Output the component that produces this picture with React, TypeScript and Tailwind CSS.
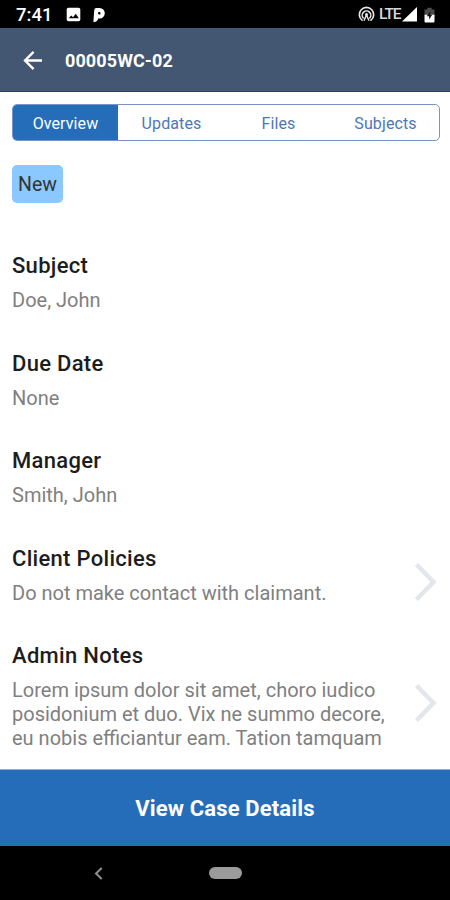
import clsx from "clsx"

const tabs = ["Overview", "Updates", "Files", "Subjects"]

const sections = [
  { title: "Subject", body: "Doe, John", link: false },
  { title: "Due Date", body: "None", link: false },
  { title: "Manager", body: "Smith, John", link: false },
  {
    title: "Client Policies",
    body: "Do not make contact with claimant.",
    link: true,
  },
  {
    title: "Admin Notes",
    body: "Lorem ipsum dolor sit amet, choro iudico posidonium et duo. Vix ne summo decore, eu nobis efficiantur eam. Tation tamquam",
    link: true,
  },
]

function StatusBar() {
  return (
    <div className="flex h-[27.5px] shrink-0 items-center bg-black pl-4 pr-[15px] text-white">
      <span className="w-[50px] pt-0.5 text-[18.5px] font-medium leading-none">
        7:41
      </span>
      <svg className="mt-0.5" width="15" height="15" viewBox="0 0 15 15">
        <rect x="0.7" y="0.7" width="13.6" height="13.6" rx="1.8" fill="#fff" />
        <path d="M2.8 11.2 5.2 8.4 7 10.2l2.8-3.4 3 4.4z" fill="#000" />
      </svg>
      <svg className="ml-3 mt-0.5" width="12" height="14" viewBox="0 0 12 14">
        <path
          fill="#fff"
          fillRule="evenodd"
          d="M1.2 2.5A2.4 2.4 0 0 1 3.6.1h3a5.2 5.2 0 0 1 0 10.4H5.2A3.7 3.7 0 0 1 .4 13.7zM6.3 4a1.3 1.3 0 1 0 0 2.6 1.3 1.3 0 0 0 0-2.6z"
        />
      </svg>
      <div className="ml-auto flex items-center pt-0.5">
        <svg width="17" height="17" viewBox="0 0 17 17" fill="none" stroke="#e8e8e8" strokeLinecap="round">
          <path d="M4 14.2a7.2 7.2 0 1 1 9 0" strokeWidth="1.6" />
          <path d="M5.2 12a4.3 4.3 0 1 1 6.6 0" strokeWidth="1.5" />
          <path d="M6.2 14.2 8.5 9l2.3 5.2" strokeWidth="1.4" />
          <circle cx="8.5" cy="8.6" r="1.5" fill="#e8e8e8" stroke="none" />
        </svg>
        <span className="ml-1 w-[21px] text-[15.5px] font-medium leading-none tracking-[-1.1px] text-[#d8d8d8]">
          LTE
        </span>
        <svg className="ml-0.5" width="15" height="15" viewBox="0 0 15 15">
          <path d="M15 0v14.5H0z" fill="#fff" />
        </svg>
        <svg className="ml-[7px]" width="11" height="16" viewBox="0 0 11 16">
          <path d="M3.3.8h4.4v1.6h2.8v5.8H.5V2.4h2.8z" fill="#4b4b4b" />
          <path d="M.5 7.7h10v6.7a1 1 0 0 1-1 1h-8a1 1 0 0 1-1-1z" fill="#fff" />
          <path d="m6.3 4-3.5 5.2h2.3v3.3l3.1-4.8H6.3z" fill="#111" />
        </svg>
      </div>
    </div>
  )
}

function Header() {
  return (
    <header className="flex h-16 shrink-0 items-center border-b-[1.5px] border-[#174673] bg-[#435672] pl-[23px] pt-[3px] text-white">
      <svg width="20" height="20" viewBox="0 0 20 20" fill="none" stroke="#fff" strokeWidth="2.4">
        <path d="M19 9.5H2M10.6.9 2 9.5l8.6 8.6" />
      </svg>
      <h1 className="ml-[22px] text-[18px] font-bold tracking-[0.1px]">00005WC-02</h1>
    </header>
  )
}

export default function App() {
  return (
    <div className="flex h-[900px] w-[450px] flex-col overflow-hidden bg-white font-['Roboto',sans-serif]">
      <StatusBar />
      <Header />
      <main className="min-h-0 flex-1 overflow-hidden px-3 pt-[12.5px]">
        <nav className="flex h-[37px] w-[428px] overflow-hidden rounded-[5px] border border-[#7894c8]">
          {tabs.map((tab, i) => (
            <button
              key={tab}
              className={clsx(
                "pt-0.5 text-[16px] tracking-[0.1px]",
                i === 0 ? "w-[105px] bg-[#266db9] text-white" : "flex-1 text-[#4f77b5]"
              )}
            >
              {tab}
            </button>
          ))}
        </nav>
        <div className="mt-6 flex h-[38px] w-[51px] items-center justify-center rounded-[5px] bg-[#8ac8ff] pt-0.5 text-[19.5px] text-[#333]">
          New
        </div>
        <div className="mt-[51px] flex flex-col gap-[39.5px]">
          {sections.map((section) => (
            <section key={section.title} className="flex items-center justify-between">
              <div className="w-[385px]">
                <h2 className="text-[22px] font-medium leading-6 tracking-[0.3px] text-[#1d1d1d]">
                  {section.title}
                </h2>
                <p className="mt-2.5 text-[20px] leading-6 text-[#808080]">
                  {section.body}
                </p>
              </div>
              {section.link && (
                <svg
                  className="mt-3 shrink-0"
                  width="24"
                  height="40"
                  viewBox="0 0 24 40"
                  fill="none"
                  stroke="#e3e7eb"
                  strokeWidth="4.6"
                >
                  <path d="M2.5 2.5 19.5 20 2.5 37.5" />
                </svg>
              )}
            </section>
          ))}
        </div>
      </main>
      <button className="h-[77px] shrink-0 border-t border-[#8fb0d8] bg-[#266db9] text-[22px] font-bold tracking-[0.15px] text-white">
        View Case Details
      </button>
      <div className="flex h-[54px] shrink-0 items-center bg-black">
        <svg className="ml-[94px]" width="9" height="13" viewBox="0 0 9 13" fill="none" stroke="#8f8f8f" strokeWidth="2">
          <path d="M7.7 1 2 6.5 7.7 12" />
        </svg>
        <div className="ml-[106px] h-3 w-[33px] rounded-full bg-[#9b9b9b]" />
      </div>
    </div>
  )
}
